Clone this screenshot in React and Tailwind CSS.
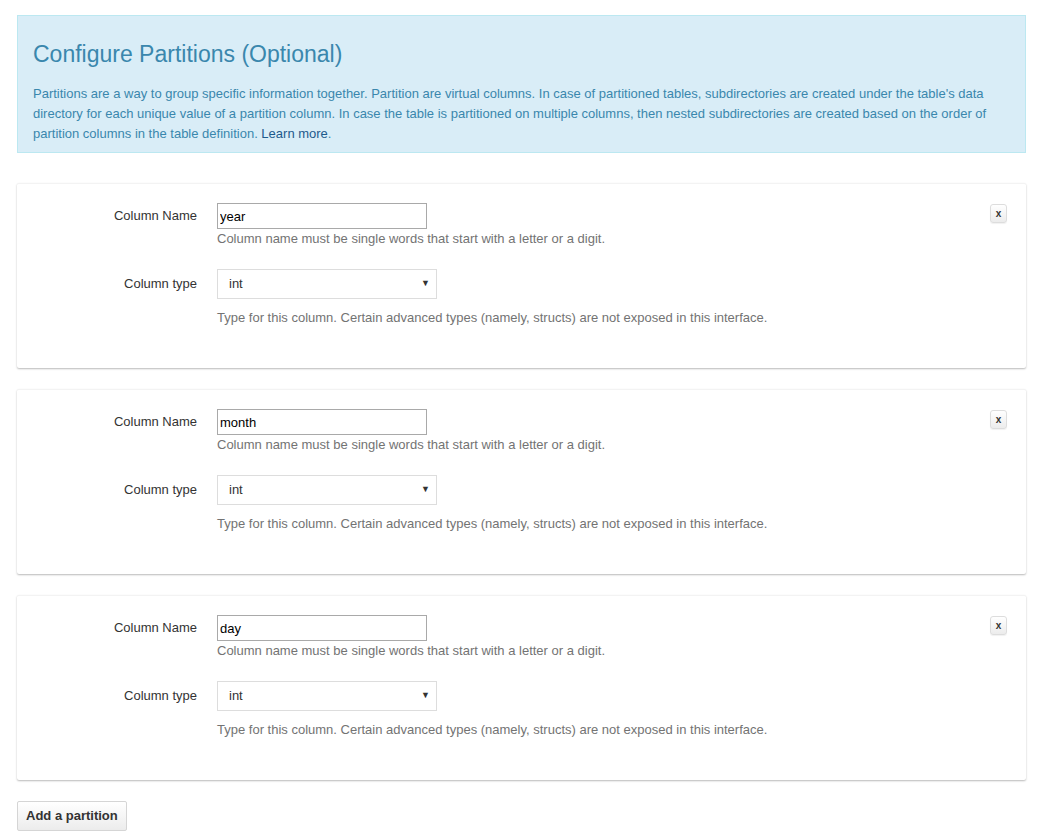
const PARTS = ['year', 'month', 'day']

function PartitionCard({ name }) {
  return (
    <div className="relative bg-white rounded-[2px] shadow-[0_1px_2px_rgba(0,0,0,0.28)] border-t border-[#f3f3f3] pt-[19px] pb-[41px]">
      <button className="absolute right-[19px] top-[20px] w-[17px] h-[19px] rounded-[3px] border border-[#ddd] bg-gradient-to-b from-white to-[#ececec] text-[10px] font-bold text-[#333] leading-none flex items-center justify-center shadow-[0_1px_1px_rgba(0,0,0,0.06)]">x</button>

      <div className="flex">
        <label className="w-[180px] shrink-0 text-right text-[13px] text-[#333] leading-[26px] mr-[20px]">Column Name</label>
        <div>
          <input
            defaultValue={name}
            className="block w-[210px] h-[26px] border border-[#a9a9a9] px-[2px] text-[13px] text-black outline-none"
          />
          <div className="text-[13px] text-[#737373] leading-[18px] mt-[1px]">Column name must be single words that start with a letter or a digit.</div>
        </div>
      </div>

      <div className="flex mt-[21px]">
        <label className="w-[180px] shrink-0 text-right text-[13px] text-[#333] leading-[30px] mr-[20px]">Column type</label>
        <div>
          <div className="w-[220px] h-[30px] border border-[#ddd] bg-white flex items-center justify-between pl-[11px] pr-[6px] text-[13px] text-[#333]">
            <span>int</span>
            <span className="text-[9px] text-[#333]">▼</span>
          </div>
          <div className="text-[13px] text-[#737373] leading-[18px] mt-[10px]">Type for this column. Certain advanced types (namely, structs) are not exposed in this interface.</div>
        </div>
      </div>
    </div>
  )
}

export default function App() {
  return (
    <div className="min-h-[834px] bg-white pl-[17px] pr-[12px] pt-[15px] pb-[4px] font-['Liberation_Sans',Arial,sans-serif]">
      <div className="bg-[#d9edf7] border border-[#bce8f1] px-[15px] pt-[22px] pb-[8px] text-[#3a87ad]">
        <h2 className="text-[23px] leading-[32px] mb-[14px]">Configure Partitions (Optional)</h2>
        <p className="text-[13px] leading-[20px]">
          Partitions are a way to group specific information together. Partition are virtual columns. In case of partitioned tables, subdirectories are created under the table's data directory for each unique value of a partition column. In case the table is partitioned on multiple columns, then nested subdirectories are created based on the order of partition columns in the table definition. <a className="text-[#1d5a8c]">Learn more</a>.
        </p>
      </div>

      <div className="mt-[30px] flex flex-col gap-[21px]">
        {PARTS.map(p => <PartitionCard key={p} name={p} />)}
      </div>

      <button className="mt-[21px] h-[30px] px-[8px] border border-[#d5d5d5] rounded-[2px] bg-gradient-to-b from-white to-[#ececec] text-[13px] font-bold text-[#333]">Add a partition</button>
    </div>
  )
}
